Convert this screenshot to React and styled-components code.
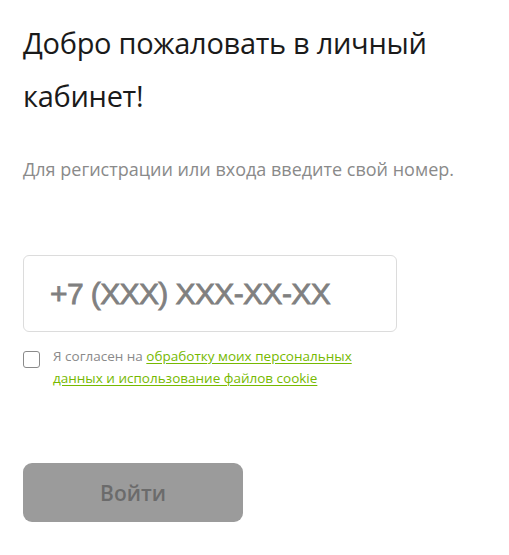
import React from "react"
import styled, { createGlobalStyle } from "styled-components"

const GlobalStyle = createGlobalStyle`
  html, body {
    margin: 0;
    padding: 0;
    background: #fff;
  }
  body {
    font-family: "Open Sans", "Noto Sans", sans-serif;
  }
`

const Page = styled.div`
  padding: 16px 23px 0;
  display: flex;
  flex-direction: column;
  align-items: flex-start;
`

const Title = styled.h1`
  margin: 0;
  font-size: 29px;
  font-weight: 400;
  line-height: 53px;
  color: #1a1a1a;
  letter-spacing: -0.3px;
`

const Lead = styled.p`
  margin: 35px 0 0;
  font-size: 18px;
  line-height: 24px;
  color: #8a8a8a;
`

const PhoneInput = styled.input`
  box-sizing: border-box;
  margin-top: 74px;
  width: 374px;
  height: 77px;
  padding: 0 0 0 26px;
  border: 1px solid #dcdcdc;
  border-radius: 6px;
  outline: none;
  font-family: "Liberation Sans", Arial, sans-serif;
  font-size: 30px;
  letter-spacing: -0.6px;
  color: #808080;
  -webkit-text-stroke: 0.8px #808080;
  &::placeholder {
    color: #808080;
  }
`

const Agree = styled.label`
  margin-top: 14px;
  display: flex;
  align-items: flex-start;
  gap: 13px;
  font-size: 13.5px;
  line-height: 21.5px;
  color: #8a8a8a;
`

const Box = styled.span`
  flex: none;
  box-sizing: border-box;
  width: 17px;
  height: 17px;
  margin-top: 5px;
  border: 1px solid #8a8a8a;
  border-radius: 3px;
`

const Text = styled.span`
  width: 310px;
`

const Link = styled.a`
  color: #76b900;
  text-decoration: underline;
  text-underline-offset: 2px;
`

const Submit = styled.button`
  margin-top: 74px;
  width: 220px;
  height: 59px;
  border: none;
  border-radius: 9px;
  background: #9b9b9b;
  color: #6b6b6b;
  font-family: "Open Sans", "Noto Sans", sans-serif;
  font-size: 21px;
  font-weight: 600;
  cursor: pointer;
`

const App = () => (
  <>
    <GlobalStyle />
    <Page>
      <Title>
        Добро пожаловать в личный
        <br />
        кабинет!
      </Title>
      <Lead>Для регистрации или входа введите свой номер.</Lead>
      <PhoneInput type="tel" placeholder="+7 (XXX) XXX-XX-XX" />
      <Agree>
        <Box />
        <Text>
          Я согласен на{" "}
          <Link href="#">
            обработку моих персональных данных и использование файлов cookie
          </Link>
        </Text>
      </Agree>
      <Submit>Войти</Submit>
    </Page>
  </>
)

export default App
